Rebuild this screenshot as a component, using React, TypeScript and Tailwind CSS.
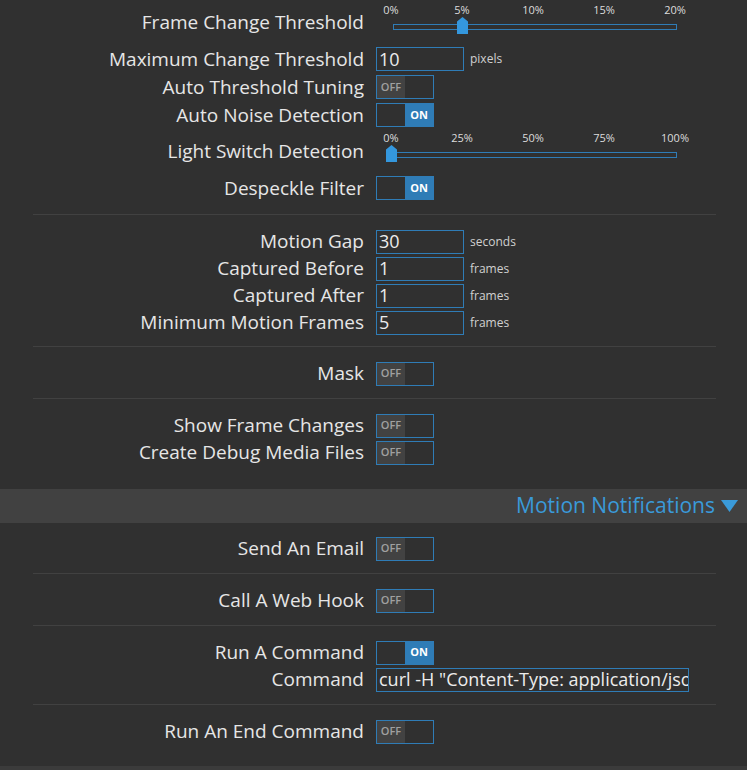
import React from 'react';

const BLUE = 'border-[#2f7cb6]';

function Label({ children }: { children: React.ReactNode }) {
  return (
    <div className="w-[364px] shrink-0 whitespace-nowrap text-right text-[19px] leading-none text-[#e6e6e6]">
      {children}
    </div>
  );
}

function Row({ label, children, h = 'h-[27px]' }: { label: string; children: React.ReactNode; h?: string }) {
  return (
    <div className={`flex ${h} items-center`}>
      <Label>{label}</Label>
      <div className="ml-3 flex items-center">{children}</div>
    </div>
  );
}

function Toggle({ on }: { on: boolean }) {
  return (
    <div className={`flex h-[24px] w-[58px] border ${BLUE}`}>
      {on ? (
        <>
          <div className="w-[28px]" />
          <div className="flex flex-1 items-center justify-center bg-[#2f7cb6] text-[11px] font-bold text-white">
            ON
          </div>
        </>
      ) : (
        <>
          <div className="flex w-[28px] items-center justify-center bg-[#424242] text-[11px] font-semibold text-[#a0a0a0]">
            OFF
          </div>
          <div className="flex-1" />
        </>
      )}
    </div>
  );
}

function TextInput({ value, unit, wide }: { value: string; unit?: string; wide?: boolean }) {
  return (
    <>
      <div
        className={`flex h-[24px] items-center overflow-hidden whitespace-nowrap border ${BLUE} pl-[2px] text-[18px] text-[#ececec] ${
          wide ? 'w-[313px]' : 'w-[88px]'
        }`}
      >
        {value}
      </div>
      {unit && <span className="ml-[6px] text-[12px] text-[#d0d0d0]">{unit}</span>}
    </>
  );
}

function Slider({ ticks, pos, labelTop, trackTop }: { ticks: string[]; pos: number; labelTop: string; trackTop: string }) {
  return (
    <div className="relative ml-[29px] h-full w-[284px]">
      {ticks.map((t, i) => (
        <span
          key={t}
          className={`absolute ${labelTop} -translate-x-1/2 text-[11px] leading-none text-[#dcdcdc]`}
          style={{ left: `${(i / (ticks.length - 1)) * 100 - 0.7}%` }}
        >
          {t}
        </span>
      ))}
      <div className={`absolute ${trackTop} left-0 h-[6px] w-full border border-[#2f7cb6]`} />
      <svg
        className={`absolute ${trackTop} -ml-[7px] -mt-[7px]`}
        style={{ left: `${pos * 100}%` }}
        width="11"
        height="17"
        viewBox="0 0 11 17"
      >
        <polygon points="5.5,0 11,4.5 11,17 0,17 0,4.5" fill="#3497dd" />
      </svg>
    </div>
  );
}

function SliderRow({
  label,
  ticks,
  pos,
  h,
  labelTop,
  trackTop,
}: {
  label: string;
  ticks: string[];
  pos: number;
  h: string;
  labelTop: string;
  trackTop: string;
}) {
  return (
    <div className={`flex ${h} items-center`}>
      <Label>{label}</Label>
      <div className="h-full">
        <Slider ticks={ticks} pos={pos} labelTop={labelTop} trackTop={trackTop} />
      </div>
    </div>
  );
}

function Sep() {
  return <div className="ml-[33px] mr-[31px] h-px bg-[#414141]" />;
}

export default function App() {
  return (
    <div className="min-h-screen bg-[#303030] font-['Open_Sans',sans-serif]">
      <div className="pb-[12px]">
        <SliderRow
          label="Frame Change Threshold"
          ticks={['0%', '5%', '10%', '15%', '20%']}
          pos={0.25}
          h="h-[45px]"
          labelTop="top-[4px]"
          trackTop="top-[24px]"
        />
        <Row label="Maximum Change Threshold" h="h-[28px]">
          <TextInput value="10" unit="pixels" />
        </Row>
        <Row label="Auto Threshold Tuning" h="h-[28px]">
          <Toggle on={false} />
        </Row>
        <Row label="Auto Noise Detection" h="h-[28px]">
          <Toggle on />
        </Row>
        <SliderRow
          label="Light Switch Detection"
          ticks={['0%', '25%', '50%', '75%', '100%']}
          pos={0}
          h="h-[45px]"
          labelTop="top-[3px]"
          trackTop="top-[23px]"
        />
        <Row label="Despeckle Filter" h="h-[28px]">
          <Toggle on />
        </Row>
      </div>
      <Sep />

      <div className="pb-[10px] pt-[13px]">
        <Row label="Motion Gap">
          <TextInput value="30" unit="seconds" />
        </Row>
        <Row label="Captured Before">
          <TextInput value="1" unit="frames" />
        </Row>
        <Row label="Captured After">
          <TextInput value="1" unit="frames" />
        </Row>
        <Row label="Minimum Motion Frames">
          <TextInput value="5" unit="frames" />
        </Row>
      </div>
      <Sep />

      <div className="pb-[11px] pt-[13px]">
        <Row label="Mask">
          <Toggle on={false} />
        </Row>
      </div>
      <Sep />

      <div className="pb-[23px] pt-[13px]">
        <Row label="Show Frame Changes">
          <Toggle on={false} />
        </Row>
        <Row label="Create Debug Media Files">
          <Toggle on={false} />
        </Row>
      </div>

      <div className="flex h-[34px] items-center justify-end bg-[#414141] pr-[9px]">
        <span className="text-[21px] text-[#3a9ad9]">Motion Notifications</span>
        <svg className="ml-[6px]" width="17" height="12" viewBox="0 0 17 12">
          <polygon points="0,0 17,0 8.5,12" fill="#3a9ad9" />
        </svg>
      </div>

      <div className="pb-[11px] pt-[12px]">
        <Row label="Send An Email">
          <Toggle on={false} />
        </Row>
      </div>
      <Sep />

      <div className="pb-[11px] pt-[13px]">
        <Row label="Call A Web Hook">
          <Toggle on={false} />
        </Row>
      </div>
      <Sep />

      <div className="pb-[11px] pt-[13px]">
        <Row label="Run A Command">
          <Toggle on />
        </Row>
        <Row label="Command">
          <TextInput value={'curl -H "Content-Type: application/json"'} wide />
        </Row>
      </div>
      <Sep />

      <div className="pb-[21px] pt-[13px]">
        <Row label="Run An End Command">
          <Toggle on={false} />
        </Row>
      </div>
      <div className="h-[10px] bg-[#3b3b3b]" />
    </div>
  );
}
